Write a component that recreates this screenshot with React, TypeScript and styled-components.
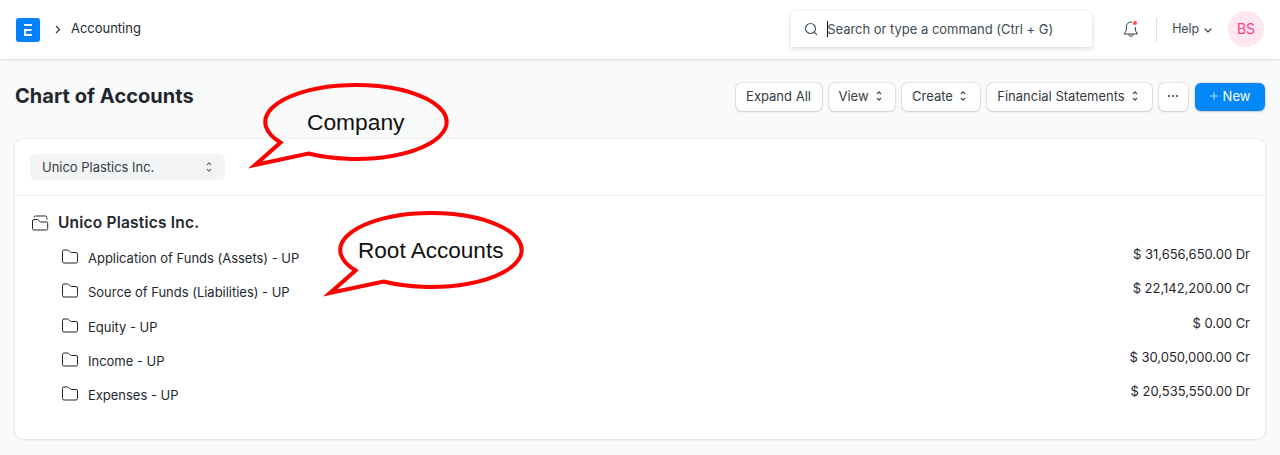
import React from "react";
import styled, { createGlobalStyle } from "styled-components";

const GlobalStyle = createGlobalStyle`
  * { box-sizing: border-box; }
  body {
    margin: 0;
    background: #f9fafa;
    color: #1f272e;
    font-family: Inter, "Liberation Sans", sans-serif;
    font-size: 13px;
    letter-spacing: -0.02px;
    overflow: hidden;
  }
`;

const Page = styled.div`
  position: relative;
  height: 455px;
`;

const Navbar = styled.header`
  display: flex;
  align-items: center;
  height: 59px;
  padding: 0 16px;
  background: #fff;
  box-shadow: 0 1px 2px rgba(25, 39, 52, 0.12), 0 0 1px rgba(25, 39, 52, 0.12);
`;

const Crumbs = styled.nav`
  display: flex;
  align-items: center;
  flex: 1;
`;

const Logo = styled.svg`
  display: block;
  margin-right: 15px;
`;

const Crumb = styled.span`
  margin: -3px 0 0 10px;
  line-height: 20px;
`;

const Search = styled.div`
  display: flex;
  align-items: center;
  width: 301px;
  height: 36px;
  margin-top: -1px;
  padding-left: 13px;
  border-radius: 6px 6px 0 0;
  background: #fff;
  color: #404b55;
  box-shadow: 0 1px 4px rgba(17, 43, 66, 0.14), 0 2px 6px rgba(17, 43, 66, 0.06);
`;

const Caret = styled.span`
  width: 1px;
  height: 16px;
  margin: 0 -1px 0 9px;
  background: #111;
`;

const Bell = styled.svg`
  display: block;
  margin: -1px 17px 0 31px;
`;

const Divider = styled.span`
  width: 1px;
  height: 24px;
  background: #dce0e3;
`;

const Help = styled.button`
  display: flex;
  align-items: center;
  gap: 4px;
  margin: -2px 15px 0 15px;
  padding: 0;
  border: 0;
  background: none;
  color: #404b55;
  font: inherit;
  font-size: 12.5px;
  letter-spacing: -0.1px;
`;

const Avatar = styled.span`
  display: grid;
  place-items: center;
  width: 36px;
  height: 36px;
  margin-top: -2px;
  border-radius: 50%;
  background: #ffe7ef;
  color: #ff3a8c;
  font-size: 14px;
`;

const PageHead = styled.div`
  display: flex;
  align-items: center;
  justify-content: space-between;
  height: 80px;
  padding: 0 15px;
`;

const Title = styled.h1`
  margin: -6px 0 0;
  font-size: 20px;
  font-weight: 700;
  line-height: 28px;
  letter-spacing: 0.05px;
`;

const Actions = styled.div`
  display: flex;
  gap: 7px;
  margin-top: -4px;
`;

const Button = styled.button<{ $width: number; $primary?: boolean }>`
  display: flex;
  align-items: center;
  justify-content: center;
  gap: 4px;
  width: ${(p) => p.$width}px;
  height: 28px;
  padding: 0 1px 2px 0;
  border: 0;
  border-radius: 6px;
  background: ${(p) => (p.$primary ? "#0289f7" : "#fff")};
  color: ${(p) => (p.$primary ? "#fff" : "#333c44")};
  font: inherit;
  letter-spacing: 0;
  white-space: nowrap;
  box-shadow: 0 0 1px 0.5px rgba(17, 43, 66, 0.1), 0 1px 2px rgba(17, 43, 66, 0.13);
`;

const Card = styled.main`
  height: 300px;
  margin: 0 15px;
  border-radius: 8px;
  background: #fff;
  box-shadow: 0 0 2px rgba(25, 39, 52, 0.11), 0 1px 3px rgba(25, 39, 52, 0.08);
`;

const Filters = styled.div`
  height: 57px;
  padding: 15px;
  border-bottom: 1px solid #f0f1f3;
`;

const Select = styled.div`
  display: flex;
  align-items: center;
  justify-content: space-between;
  width: 195px;
  height: 26px;
  padding: 0 10px 0 12px;
  border-radius: 6px;
  background: #f3f4f6;
  color: #333c44;
`;

const Tree = styled.div`
  padding: 10px 15px 0 17px;
`;

const RootNode = styled.div`
  display: flex;
  align-items: center;
  gap: 9px;
  height: 34px;
`;

const RootLabel = styled.strong`
  margin-top: -2px;
  font-size: 15.5px;
  font-weight: 600;
  letter-spacing: 0.2px;
`;

const Row = styled.div`
  display: flex;
  align-items: center;
  height: 34.25px;
  padding-left: 29px;
`;

const RowLabel = styled.span`
  flex: 1;
  margin: 2px 0 0 9px;
`;

const Amount = styled.span`
  margin-top: -6px;
`;

const Callout = styled.svg<{ $x: number; $y: number }>`
  position: absolute;
  left: ${(p) => p.$x}px;
  top: ${(p) => p.$y}px;
  font-family: "Liberation Sans", Arial, sans-serif;
`;

const Sort = ({ color = "#333c44" }: { color?: string }) => (
  <svg width="12" height="12" viewBox="0 0 12 12" fill="none" stroke={color} strokeWidth="1.1" strokeLinecap="round" strokeLinejoin="round">
    <path d="M4.2 3.6 6 1.8l1.8 1.8M4.2 8.4 6 10.2l1.8-1.8" />
  </svg>
);

const Folder = () => (
  <svg width="18" height="18" viewBox="0 0 18 18" fill="none" stroke="#1f272e" strokeLinejoin="round">
    <path d="M1.5 13.5V3.5A1.5 1.5 0 0 1 3 2h3.6a1.5 1.5 0 0 1 1 .4l1.7 1.7a1.5 1.5 0 0 0 1 .4H15A1.5 1.5 0 0 1 16.5 6v7.5A1.5 1.5 0 0 1 15 15H3a1.5 1.5 0 0 1-1.5-1.5Z" />
  </svg>
);

const OpenFolder = () => (
  <svg width="17" height="18" viewBox="0 0 17 18" fill="none" stroke="#1f272e" strokeLinejoin="round">
    <path d="M.5 14.5V7A1.5 1.5 0 0 1 2 5.5h3.2a1.5 1.5 0 0 1 1 .4l1.5 1.7a1.5 1.5 0 0 0 1 .4H14.5A1.2 1.2 0 0 1 15.7 9.2v5.3A1.5 1.5 0 0 1 14.2 16H2a1.5 1.5 0 0 1-1.5-1.5Z" />
    <path d="M2 3.5A1.5 1.5 0 0 1 3.3 2h10.2a1.3 1.3 0 0 1 1.3 1.3v2.2" />
  </svg>
);

const Bubble = ({ x, y, size, textX, label }: { x: number; y: number; size: number; textX: number; label: string }) => (
  <Callout $x={x} $y={y} width="204" height="90" viewBox="0 0 204 90">
    <path
      d="M33.5 61.5 A90.7 37 0 1 1 61.5 72.5 L8 84 Z"
      fill="none"
      stroke="#fb0200"
      strokeWidth="4"
      strokeMiterlimit="10"
    />
    <text x={textX} y="48.5" fontSize={size} fill="#111">{label}</text>
  </Callout>
);

const accounts = [
  ["Application of Funds (Assets) - UP", "$ 31,656,650.00 Dr"],
  ["Source of Funds (Liabilities) - UP", "$ 22,142,200.00 Cr"],
  ["Equity - UP", "$ 0.00 Cr"],
  ["Income - UP", "$ 30,050,000.00 Cr"],
  ["Expenses - UP", "$ 20,535,550.00 Dr"],
];

export default function App() {
  return (
    <Page>
      <GlobalStyle />
      <Navbar>
        <Crumbs>
          <Logo width="24" height="24" viewBox="0 0 24 24">
            <rect width="24" height="24" rx="3" fill="#0080ff" />
            <path d="M8 6h8v2H8zM8 11h7.5v2H10v3h6v2H8z" fill="#fff" />
          </Logo>
          <svg width="6" height="10" viewBox="0 0 6 10" fill="none" stroke="#333c44" strokeWidth="1.2">
            <path d="m1 1 3.5 3.5L1 8" />
          </svg>
          <Crumb>Accounting</Crumb>
        </Crumbs>
        <Search>
          <svg width="14" height="14" viewBox="0 0 14 14" fill="none" stroke="#4c5a67" strokeWidth="1.2" strokeLinecap="round">
            <circle cx="6.5" cy="6.5" r="5" />
            <path d="m10.2 10.2 2.3 2.3" />
          </svg>
          <Caret />
          <span>Search or type a command (Ctrl + G)</span>
        </Search>
        <Bell width="16" height="18" viewBox="0 0 16 18" fill="none" stroke="#333c44">
          <path d="M9 2H8a4.7 4.7 0 0 0-4.7 4.7v3.8L1.2 14h13.1l-1.9-3.5V7" strokeLinejoin="round" />
          <path d="M5.8 14.2a2.1 2.1 0 0 0 4.2 0" />
          <circle cx="12" cy="3" r="2" fill="#ff4d4d" stroke="none" />
        </Bell>
        <Divider />
        <Help>
          Help
          <svg width="10" height="8" viewBox="0 0 10 8" fill="none" stroke="#333c44" strokeWidth="1.1" strokeLinecap="round">
            <path d="m2 4 3 3 3-3" />
          </svg>
        </Help>
        <Avatar>BS</Avatar>
      </Navbar>

      <PageHead>
        <Title>Chart of Accounts</Title>
        <Actions>
          <Button $width={86}>Expand All</Button>
          <Button $width={66}>View <Sort /></Button>
          <Button $width={78}>Create <Sort /></Button>
          <Button $width={165}>Financial Statements <Sort /></Button>
          <Button $width={29} aria-label="More">
            <svg width="12" height="4" viewBox="0 0 12 4" fill="#333c44">
              <circle cx="2" cy="2" r="1" />
              <circle cx="6" cy="2" r="1" />
              <circle cx="10" cy="2" r="1" />
            </svg>
          </Button>
          <Button $width={70} $primary>
            <svg width="10" height="10" viewBox="0 0 10 10" stroke="#b8dcfd">
              <path d="M5 1v8M1 5h8" />
            </svg>
            New
          </Button>
        </Actions>
      </PageHead>

      <Card>
        <Filters>
          <Select>
            Unico Plastics Inc.
            <Sort color="#5c6872" />
          </Select>
        </Filters>
        <Tree>
          <RootNode>
            <OpenFolder />
            <RootLabel>Unico Plastics Inc.</RootLabel>
          </RootNode>
          {accounts.map(([name, amount]) => (
            <Row key={name}>
              <Folder />
              <RowLabel>{name}</RowLabel>
              <Amount>{amount}</Amount>
            </Row>
          ))}
        </Tree>
      </Card>

      <Bubble x={247.2} y={81.3} size={22.8} textX={60} label="Company" />
      <Bubble x={321.7} y={208.5} size={22.6} textX={36} label="Root Accounts" />
    </Page>
  );
}
